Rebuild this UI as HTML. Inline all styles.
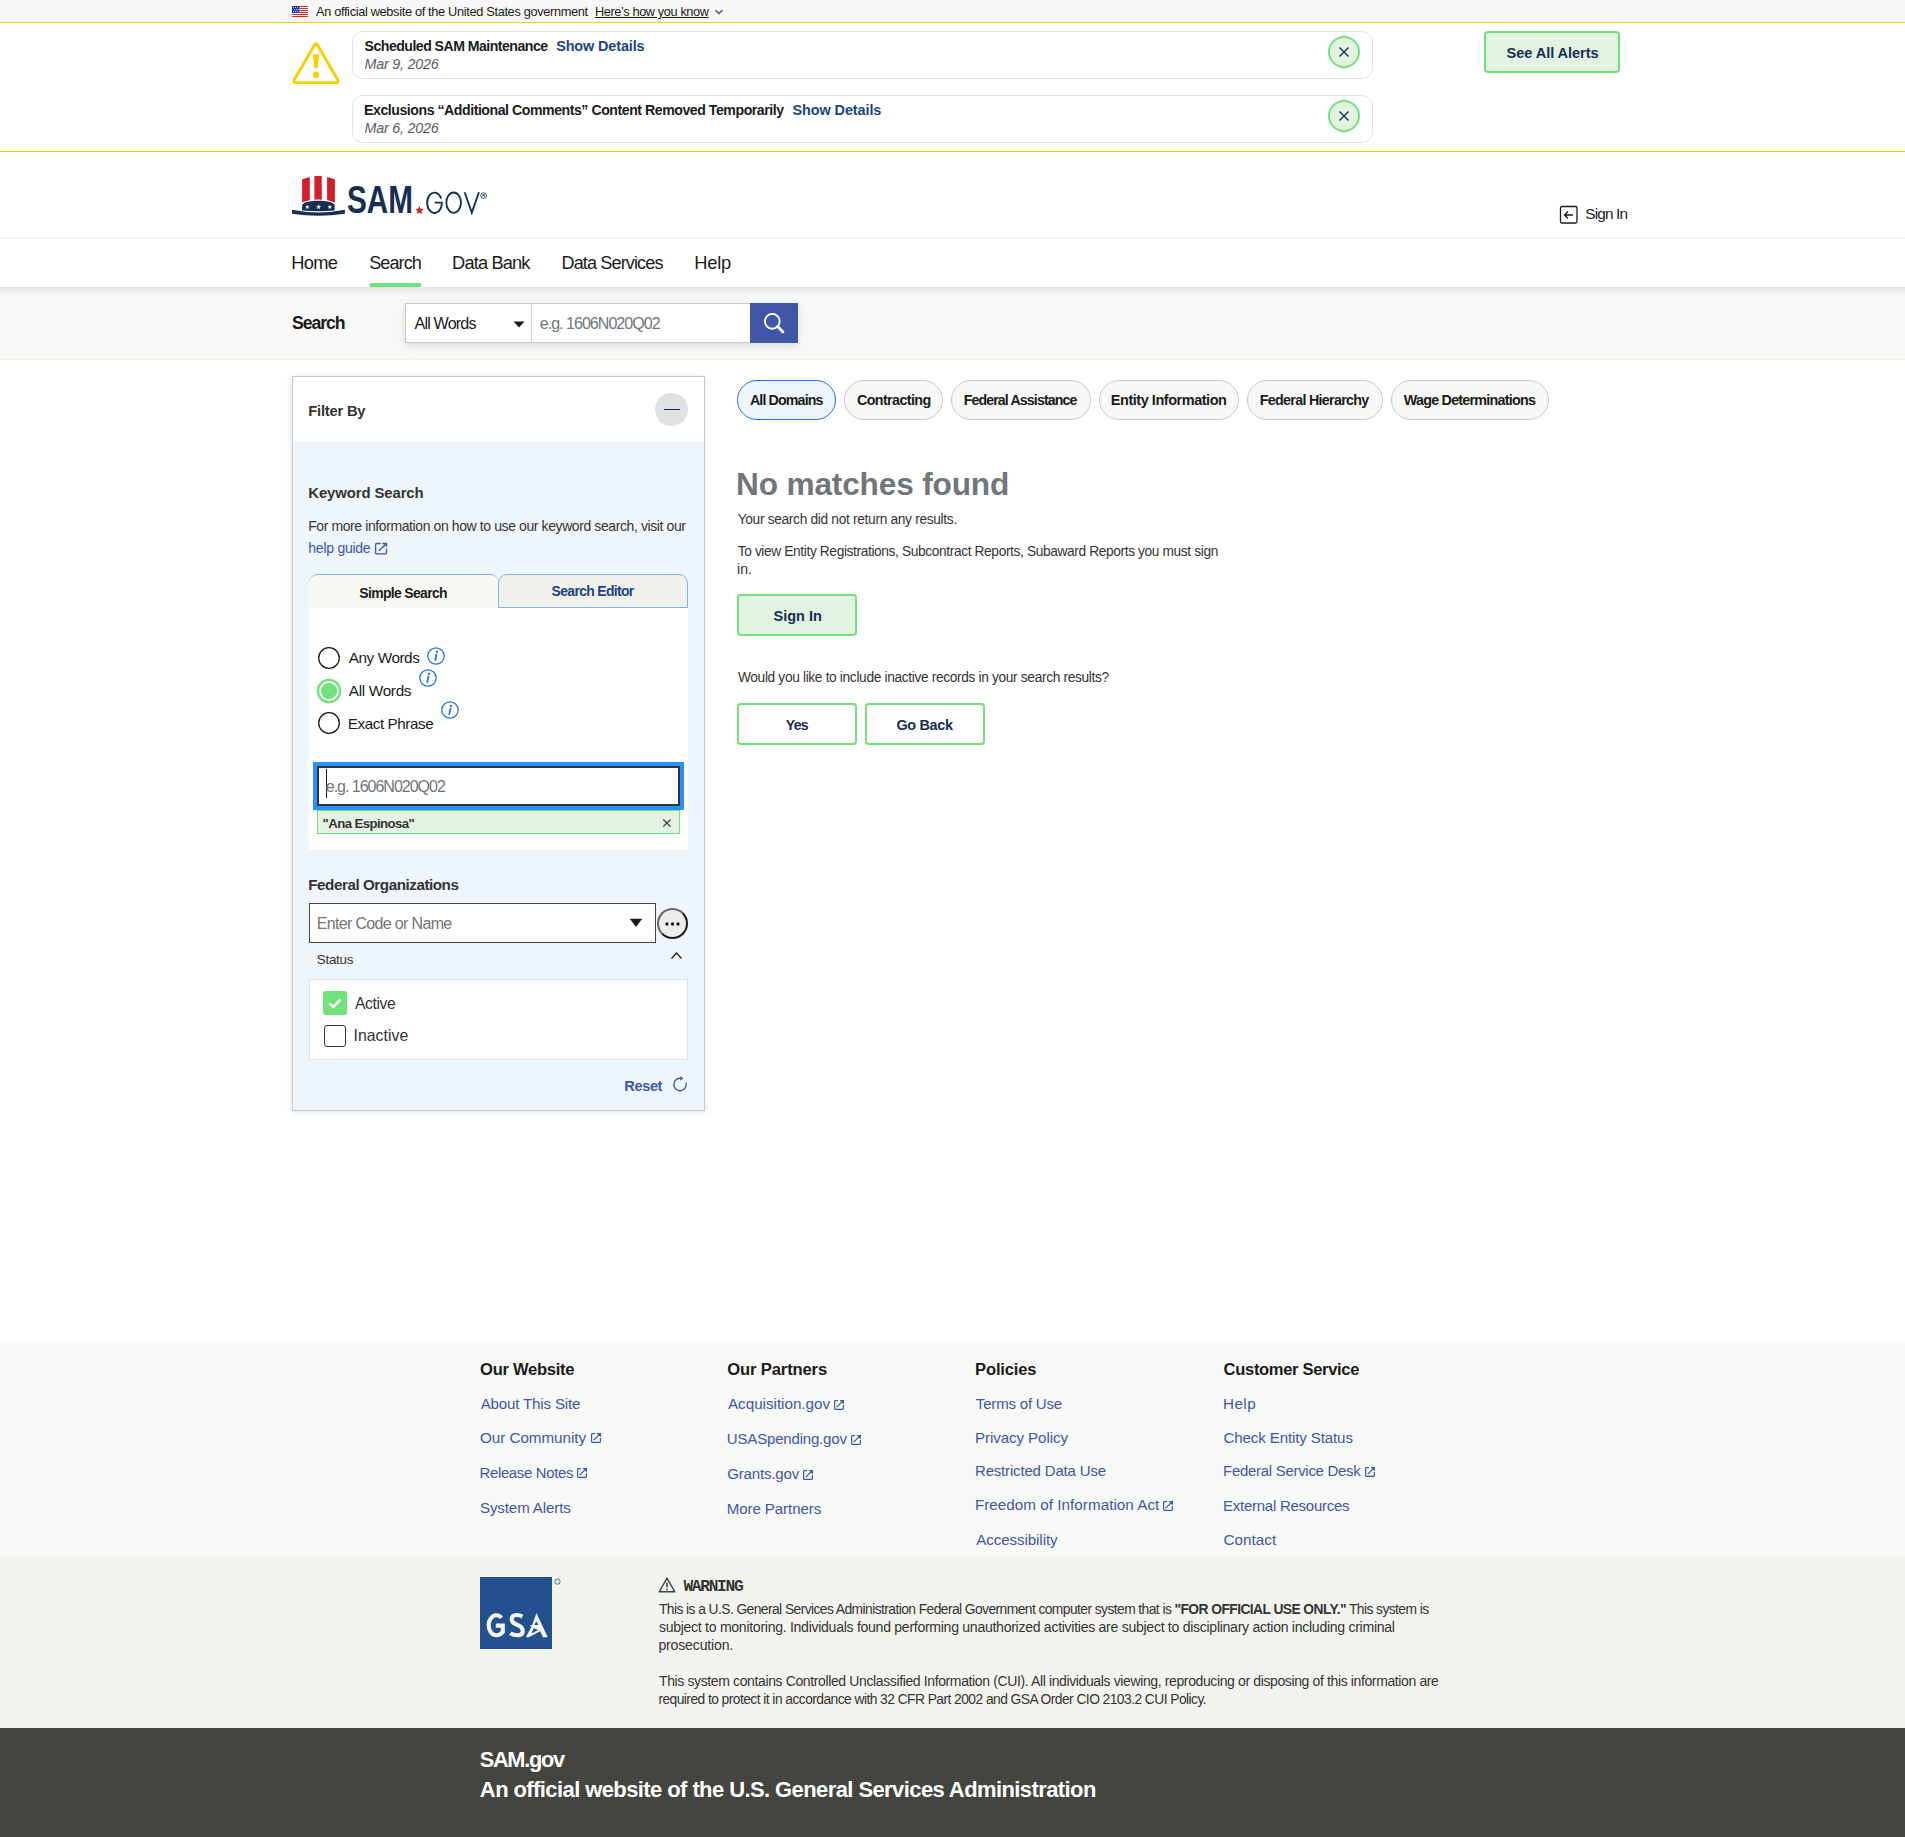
<!DOCTYPE html>
<html><head><meta charset="utf-8"><title>SAM.gov Search</title>
<style>
html,body{margin:0;padding:0;}
body{width:1905px;height:1837px;position:relative;overflow:hidden;background:#fff;font-family:'Liberation Sans', sans-serif;}
.t{position:absolute;white-space:nowrap;}
</style></head><body>
<div style="position:absolute;left:0px;top:0px;width:1905px;height:22px;background:#f7f7f5;"></div>
<div style="position:absolute;left:0px;top:22px;width:1905px;height:1px;background:#face00;"></div>
<div style="position:absolute;left:0px;top:151px;width:1905px;height:1px;background:#face00;"></div>
<div style="position:absolute;left:0px;top:238px;width:1905px;height:1px;background:#f0f0f0;"></div>
<div style="position:absolute;left:0px;top:287px;width:1905px;height:73px;background:#f8f8f6;"></div>
<div style="position:absolute;left:0px;top:359px;width:1905px;height:1px;background:#f1f1ec;"></div>
<div style="position:absolute;left:0px;top:1343px;width:1905px;height:214px;background:#f8f8f6;"></div>
<div style="position:absolute;left:0px;top:1557px;width:1905px;height:171px;background:#f3f3ee;"></div>
<div style="position:absolute;left:0px;top:1728px;width:1905px;height:109px;background:#454540;"></div>
<svg style="position:absolute;left:292px;top:6px" width="16" height="11" viewBox="0 0 16 11">
<rect width="16" height="11" fill="#fff"/>
<g fill="#e2261c"><rect x="7.5" y="0" width="8.5" height="1"/><rect x="7.5" y="2" width="8.5" height="1"/><rect x="7.5" y="4" width="8.5" height="1"/><rect x="7.5" y="6" width="8.5" height="1"/><rect x="0" y="8" width="16" height="1"/><rect x="0" y="10" width="16" height="1"/></g>
<rect x="0" y="0" width="7.5" height="7" fill="#0b2fb0"/>
<g fill="#fff"><circle cx="1.6" cy="1.6" r=".55"/><circle cx="3.6" cy="1.6" r=".55"/><circle cx="5.6" cy="1.6" r=".55"/><circle cx="2.6" cy="3.5" r=".55"/><circle cx="4.6" cy="3.5" r=".55"/><circle cx="6.3" cy="3.5" r=".55"/><circle cx="1.6" cy="5.4" r=".55"/><circle cx="3.6" cy="5.4" r=".55"/><circle cx="5.6" cy="5.4" r=".55"/></g>
</svg>
<svg style="position:absolute;left:714px;top:8px" width="10" height="8" viewBox="0 0 10 8"><path d="M1.5 2.2 L5 5.6 L8.5 2.2" fill="none" stroke="#3f57a6" stroke-width="1.4"/></svg>
<svg style="position:absolute;left:291px;top:41px" width="50" height="44" viewBox="0 0 50 44">
<path d="M23.5 4 Q25 1.4 26.5 4 L46.8 39 Q48.3 41.6 45.3 41.6 L4.7 41.6 Q1.7 41.6 3.2 39 Z" fill="none" stroke="#face00" stroke-width="2.9" stroke-linejoin="round"/>
<path d="M22 15.2 Q22 13 25 13 Q28 13 28 15.2 L26.7 26.6 Q25 28.6 23.3 26.6 Z" fill="#face00"/>
<circle cx="25" cy="33.9" r="3.1" fill="#face00"/>
</svg>
<div style="position:absolute;left:352px;top:31px;width:1021px;height:48px;box-sizing:border-box;border:1px solid #dfe1e2;border-radius:11px;background:#fff;"></div>
<div style="position:absolute;left:1328px;top:36px;width:32px;height:32px;box-sizing:border-box;border:2px solid #70e17b;border-radius:50%;background:#e3f3e1;"></div>
<svg style="position:absolute;left:1337px;top:45px" width="14" height="14" viewBox="0 0 14 14"><path d="M2.5 2.5 L11.5 11.5 M11.5 2.5 L2.5 11.5" stroke="#162e51" stroke-width="1.4"/></svg>
<div style="position:absolute;left:352px;top:95px;width:1021px;height:48px;box-sizing:border-box;border:1px solid #dfe1e2;border-radius:11px;background:#fff;"></div>
<div style="position:absolute;left:1328px;top:100px;width:32px;height:32px;box-sizing:border-box;border:2px solid #70e17b;border-radius:50%;background:#e3f3e1;"></div>
<svg style="position:absolute;left:1337px;top:109px" width="14" height="14" viewBox="0 0 14 14"><path d="M2.5 2.5 L11.5 11.5 M11.5 2.5 L2.5 11.5" stroke="#162e51" stroke-width="1.4"/></svg>
<div style="position:absolute;left:1484px;top:31px;width:136px;height:42px;box-sizing:border-box;border:2px solid #70e17b;border-radius:4px;background:#e3f3e1;"></div>
<svg style="position:absolute;left:291px;top:175px" width="198" height="44" viewBox="0 0 198 44">
<path d="M11.1 4.2 L18.8 1.9 L18.8 24.9 Q15 25.9 11.1 27.6 Z" fill="#d21f2d"/>
<path d="M23.4 1 L30.8 1 L30.8 24.7 Q27.1 24.2 23.4 24.7 Z" fill="#d21f2d"/>
<path d="M36.1 2 L43.9 4.2 L43.9 27.7 Q40 25.9 36.1 24.9 Z" fill="#d21f2d"/>
<path d="M11.1 29.9 C14 24.4 40.8 24.4 43.7 29.9 L43.7 35.5 Q27.4 37.1 11.1 35.5 Z" fill="#162e51"/>
<g fill="#fff"><path d="M16.30 29.70 L16.89 31.29 L18.58 31.36 L17.25 32.41 L17.71 34.04 L16.30 33.10 L14.89 34.04 L15.35 32.41 L14.02 31.36 L15.71 31.29Z"/><path d="M27.60 29.10 L28.28 30.97 L30.26 31.03 L28.69 32.26 L29.25 34.17 L27.60 33.05 L25.95 34.17 L26.51 32.26 L24.94 31.03 L26.92 30.97Z"/><path d="M38.80 29.70 L39.39 31.29 L41.08 31.36 L39.75 32.41 L40.21 34.04 L38.80 33.10 L37.39 34.04 L37.85 32.41 L36.52 31.36 L38.21 31.29Z"/></g>
<path d="M1 34.8 Q27.5 40.2 53.9 34.8 L53.9 38.8 Q27.5 42.6 1 38.8 Z" fill="#162e51"/>
<text x="56" y="38" font-family="Liberation Sans" font-weight="700" font-size="38" fill="#162e51" textLength="66" lengthAdjust="spacingAndGlyphs">SAM</text>
<path d="M128.5 31 l1.2 2.7 3 .3 -2.2 2 .6 2.9 -2.6-1.5 -2.6 1.5 .6-2.9 -2.2-2 3-.3z" fill="#d21f2d"/>
<g fill="none" stroke="#162e51" stroke-width="1.85">
<path d="M150.2 23.6 A7.35 10.15 0 1 0 150.6 30.5 L150.9 27.6 L143.7 27.6"/>
<ellipse cx="162.65" cy="27.65" rx="7.3" ry="10.15"/>
<path d="M173.6 17.2 L180.8 37.6 L187.9 17.2"/>
</g>
<circle cx="192.6" cy="20.6" r="2.9" fill="none" stroke="#162e51" stroke-width=".8"/>
<text x="191.2" y="22.3" font-family="Liberation Sans" font-weight="700" font-size="4.2" fill="#162e51">R</text>
</svg>
<svg style="position:absolute;left:1559px;top:205px" width="20" height="19" viewBox="0 0 20 19">
<rect x="1.5" y="1.5" width="16.5" height="16.5" rx="1.5" fill="none" stroke="#1b1b1b" stroke-width="1.3"/>
<path d="M14 10 L5.5 10 M9 6.5 L5.5 10 L9 13.5" fill="none" stroke="#1b1b1b" stroke-width="1.4"/>
</svg>
<div style="position:absolute;left:0;top:287px;width:1905px;height:9px;background:linear-gradient(rgba(0,0,0,0.09),rgba(0,0,0,0));"></div>
<div style="position:absolute;left:370px;top:283px;width:51px;height:4px;background:#70e17b;"></div>
<div style="position:absolute;left:405px;top:303px;width:393px;height:40px;box-shadow:0 3px 8px rgba(0,0,0,0.12);"></div>
<div style="position:absolute;left:405px;top:303px;width:127px;height:40px;box-sizing:border-box;border:1px solid #c9c9c9;background:#fff;"></div>
<div style="position:absolute;left:531px;top:303px;width:220px;height:40px;box-sizing:border-box;border:1px solid #c9c9c9;background:#fff;"></div>
<svg style="position:absolute;left:513px;top:321px" width="12" height="7" viewBox="0 0 12 7"><path d="M0.5 0.5 L11.5 0.5 L6 6.5 Z" fill="#1b1b1b"/></svg>
<div style="position:absolute;left:750px;top:303px;width:48px;height:40px;background:#3f57a6;"></div>
<svg style="position:absolute;left:762px;top:311px" width="24" height="24" viewBox="0 0 24 24"><circle cx="10.3" cy="10.3" r="7.4" fill="none" stroke="#fff" stroke-width="1.9"/><path d="M15.6 15.6 L21 21" stroke="#fff" stroke-width="2.8" stroke-linecap="round"/></svg>
<div style="position:absolute;left:292px;top:376px;width:413px;height:735px;box-sizing:border-box;border:1px solid #c9c9c9;background:#eef5fb;box-shadow:0 1px 6px rgba(0,0,0,0.12);"></div>
<div style="position:absolute;left:293px;top:377px;width:411px;height:65px;background:#fff;"></div>
<div style="position:absolute;left:655px;top:393px;width:33px;height:33px;border-radius:50%;background:#dfe1e2;"></div>
<div style="position:absolute;left:664px;top:408.5px;width:16px;height:1.5px;background:#162e51;"></div>
<svg style="position:absolute;left:374px;top:541px" width="14" height="14" viewBox="0 0 14 14"><path d="M6.7 2.5 L2.6 2.5 Q1.6 2.5 1.6 3.5 L1.6 11.9 Q1.6 12.9 2.6 12.9 L11.5 12.9 Q12.5 12.9 12.5 11.9 L12.5 7.7" fill="none" stroke="#3f57a6" stroke-width="1.3"/><path d="M8.2 2.5 L12.5 2.5 L12.5 5.8 M12.3 2.7 L5 9.7" fill="none" stroke="#3f57a6" stroke-width="1.3"/></svg>
<div style="position:absolute;left:309px;top:574px;width:190px;height:34px;box-sizing:border-box;border-top:1px solid #85aef2;border-radius:9px 9px 0 0;background:#f7f7f4;"></div>
<div style="position:absolute;left:498px;top:574px;width:190px;height:34px;box-sizing:border-box;border:1px solid #85aef2;border-radius:9px 9px 0 0;background:#f1f1ec;"></div>
<div style="position:absolute;left:309px;top:608px;width:379px;height:242px;background:#fff;"></div>
<svg style="position:absolute;left:317px;top:645.8px" width="24" height="24" viewBox="0 0 24 24"><circle cx="12" cy="12" r="10.3" fill="#fff" stroke="#1b1b1b" stroke-width="1.3"/></svg>
<svg style="position:absolute;left:427px;top:647.3px" width="18" height="18" viewBox="0 0 18 18"><circle cx="9" cy="9" r="8.2" fill="none" stroke="#2672de" stroke-width="1.3"/><circle cx="10" cy="5" r="1.15" fill="#2672de"/><path d="M9.4 7.6 L8.3 13.2" stroke="#2672de" stroke-width="1.8" stroke-linecap="round"/></svg>
<svg style="position:absolute;left:316px;top:677.6px" width="26" height="26" viewBox="0 0 26 26"><circle cx="13" cy="13" r="11.1" fill="#fff" stroke="#70e17b" stroke-width="2.4"/><circle cx="13" cy="13" r="8.1" fill="#70e17b"/></svg>
<svg style="position:absolute;left:419px;top:668.6px" width="18" height="18" viewBox="0 0 18 18"><circle cx="9" cy="9" r="8.2" fill="none" stroke="#2672de" stroke-width="1.3"/><circle cx="10" cy="5" r="1.15" fill="#2672de"/><path d="M9.4 7.6 L8.3 13.2" stroke="#2672de" stroke-width="1.8" stroke-linecap="round"/></svg>
<svg style="position:absolute;left:317px;top:710.8px" width="24" height="24" viewBox="0 0 24 24"><circle cx="12" cy="12" r="10.3" fill="#fff" stroke="#1b1b1b" stroke-width="1.3"/></svg>
<svg style="position:absolute;left:441px;top:701px" width="18" height="18" viewBox="0 0 18 18"><circle cx="9" cy="9" r="8.2" fill="none" stroke="#2672de" stroke-width="1.3"/><circle cx="10" cy="5" r="1.15" fill="#2672de"/><path d="M9.4 7.6 L8.3 13.2" stroke="#2672de" stroke-width="1.8" stroke-linecap="round"/></svg>
<div style="position:absolute;left:313px;top:762px;width:371px;height:48px;box-sizing:border-box;border:4px solid #2491ff;"></div>
<div style="position:absolute;left:317px;top:766px;width:363px;height:40px;box-sizing:border-box;border:2px solid #333;background:#fff;"></div>
<div style="position:absolute;left:326px;top:769px;width:1px;height:29px;background:#1b1b1b;"></div>
<div style="position:absolute;left:317px;top:810px;width:363px;height:24px;box-sizing:border-box;border:1px solid #70e17b;background:#e3f3e1;"></div>
<svg style="position:absolute;left:662px;top:818px" width="10" height="10" viewBox="0 0 10 10"><path d="M1.3 1.5 L8.5 8.7 M8.5 1.5 L1.3 8.7" stroke="#333" stroke-width="1.2"/></svg>
<div style="position:absolute;left:309px;top:903px;width:347px;height:40px;box-sizing:border-box;border:1.5px solid #454540;background:#fff;"></div>
<svg style="position:absolute;left:629px;top:918px" width="14" height="10" viewBox="0 0 14 10"><path d="M0.8 0.8 L13.2 0.8 L7 9 Z" fill="#1b1b1b"/></svg>
<div style="position:absolute;left:657px;top:908px;width:31px;height:31px;box-sizing:border-box;border-radius:50%;border:2px solid #1b1b1b;border-top-color:#666;border-left-color:#666;background:#ececec;"></div>
<svg style="position:absolute;left:664px;top:921px" width="18" height="6" viewBox="0 0 18 6"><circle cx="3" cy="3" r="1.7" fill="#1b1b1b"/><circle cx="8.5" cy="3" r="1.7" fill="#1b1b1b"/><circle cx="14" cy="3" r="1.7" fill="#1b1b1b"/></svg>
<svg style="position:absolute;left:670px;top:951px" width="13" height="9" viewBox="0 0 13 9"><path d="M1.5 7.5 L6.5 2 L11.5 7.5" fill="none" stroke="#1b1b1b" stroke-width="1.3"/></svg>
<div style="position:absolute;left:309px;top:979px;width:379px;height:81px;box-sizing:border-box;border:1px solid #dfe1e2;background:#fff;"></div>
<div style="position:absolute;left:323px;top:991px;width:24px;height:24px;border-radius:3px;background:#70e17b;"></div>
<svg style="position:absolute;left:323px;top:991px" width="24" height="24" viewBox="0 0 24 24"><path d="M6.5 12.5 L10.3 16 L17.5 8.5" fill="none" stroke="#fff" stroke-width="2.6"/></svg>
<div style="position:absolute;left:324px;top:1025px;width:22px;height:22px;box-sizing:border-box;border:1.5px solid #333;border-radius:3px;background:#fff;"></div>
<svg style="position:absolute;left:671px;top:1075px" width="17" height="17" viewBox="0 0 17 17"><path d="M8.9 3.3 A6.2 6.2 0 1 0 14.9 7.6" fill="none" stroke="#3f57a6" stroke-width="1.4"/><path d="M9.2 1.1 L12.3 3.4 L9.2 5.7 Z" fill="#3f57a6"/></svg>
<div style="position:absolute;left:737px;top:380px;width:99px;height:40px;box-sizing:border-box;border:1px solid #2672de;border-radius:20px;background:#eff6fb;"></div>
<div style="position:absolute;left:844px;top:380px;width:99px;height:40px;box-sizing:border-box;border:1px solid #c9c9c9;border-radius:20px;background:#f7f7f5;"></div>
<div style="position:absolute;left:951px;top:380px;width:140px;height:40px;box-sizing:border-box;border:1px solid #c9c9c9;border-radius:20px;background:#f7f7f5;"></div>
<div style="position:absolute;left:1099px;top:380px;width:140px;height:40px;box-sizing:border-box;border:1px solid #c9c9c9;border-radius:20px;background:#f7f7f5;"></div>
<div style="position:absolute;left:1247px;top:380px;width:136px;height:40px;box-sizing:border-box;border:1px solid #c9c9c9;border-radius:20px;background:#f7f7f5;"></div>
<div style="position:absolute;left:1391px;top:380px;width:158px;height:40px;box-sizing:border-box;border:1px solid #c9c9c9;border-radius:20px;background:#f7f7f5;"></div>
<div style="position:absolute;left:737px;top:594px;width:120px;height:42px;box-sizing:border-box;border:2px solid #70e17b;border-radius:4px;background:#e3f3e1;"></div>
<div style="position:absolute;left:737px;top:703px;width:120px;height:42px;box-sizing:border-box;border:2px solid #70e17b;border-radius:4px;background:#fff;"></div>
<div style="position:absolute;left:865px;top:703px;width:120px;height:42px;box-sizing:border-box;border:2px solid #70e17b;border-radius:4px;background:#fff;"></div>
<svg style="position:absolute;left:591px;top:1433px" width="11" height="11" viewBox="0 0 11 11"><path d="M3.9 0.6 L1.4 0.6 Q0.6 0.6 0.6 1.4 L0.6 8.6 Q0.6 9.4 1.4 9.4 L8.6 9.4 Q9.4 9.4 9.4 8.6 L9.4 5.0 M6.1 0.6 L9.4 0.6 L9.4 3.7 M9.2 0.8 L2.6 7.1" fill="none" stroke="#3f57a6" stroke-width="1.2"/></svg>
<svg style="position:absolute;left:577px;top:1468px" width="11" height="11" viewBox="0 0 11 11"><path d="M3.9 0.6 L1.4 0.6 Q0.6 0.6 0.6 1.4 L0.6 8.6 Q0.6 9.4 1.4 9.4 L8.6 9.4 Q9.4 9.4 9.4 8.6 L9.4 5.0 M6.1 0.6 L9.4 0.6 L9.4 3.7 M9.2 0.8 L2.6 7.1" fill="none" stroke="#3f57a6" stroke-width="1.2"/></svg>
<svg style="position:absolute;left:834px;top:1400px" width="11" height="11" viewBox="0 0 11 11"><path d="M3.9 0.6 L1.4 0.6 Q0.6 0.6 0.6 1.4 L0.6 8.6 Q0.6 9.4 1.4 9.4 L8.6 9.4 Q9.4 9.4 9.4 8.6 L9.4 5.0 M6.1 0.6 L9.4 0.6 L9.4 3.7 M9.2 0.8 L2.6 7.1" fill="none" stroke="#3f57a6" stroke-width="1.2"/></svg>
<svg style="position:absolute;left:851px;top:1435px" width="11" height="11" viewBox="0 0 11 11"><path d="M3.9 0.6 L1.4 0.6 Q0.6 0.6 0.6 1.4 L0.6 8.6 Q0.6 9.4 1.4 9.4 L8.6 9.4 Q9.4 9.4 9.4 8.6 L9.4 5.0 M6.1 0.6 L9.4 0.6 L9.4 3.7 M9.2 0.8 L2.6 7.1" fill="none" stroke="#3f57a6" stroke-width="1.2"/></svg>
<svg style="position:absolute;left:803px;top:1470px" width="11" height="11" viewBox="0 0 11 11"><path d="M3.9 0.6 L1.4 0.6 Q0.6 0.6 0.6 1.4 L0.6 8.6 Q0.6 9.4 1.4 9.4 L8.6 9.4 Q9.4 9.4 9.4 8.6 L9.4 5.0 M6.1 0.6 L9.4 0.6 L9.4 3.7 M9.2 0.8 L2.6 7.1" fill="none" stroke="#3f57a6" stroke-width="1.2"/></svg>
<svg style="position:absolute;left:1163px;top:1501px" width="11" height="11" viewBox="0 0 11 11"><path d="M3.9 0.6 L1.4 0.6 Q0.6 0.6 0.6 1.4 L0.6 8.6 Q0.6 9.4 1.4 9.4 L8.6 9.4 Q9.4 9.4 9.4 8.6 L9.4 5.0 M6.1 0.6 L9.4 0.6 L9.4 3.7 M9.2 0.8 L2.6 7.1" fill="none" stroke="#3f57a6" stroke-width="1.2"/></svg>
<svg style="position:absolute;left:1365px;top:1467px" width="11" height="11" viewBox="0 0 11 11"><path d="M3.9 0.6 L1.4 0.6 Q0.6 0.6 0.6 1.4 L0.6 8.6 Q0.6 9.4 1.4 9.4 L8.6 9.4 Q9.4 9.4 9.4 8.6 L9.4 5.0 M6.1 0.6 L9.4 0.6 L9.4 3.7 M9.2 0.8 L2.6 7.1" fill="none" stroke="#3f57a6" stroke-width="1.2"/></svg>
<svg style="position:absolute;left:480px;top:1577px" width="82" height="73" viewBox="0 0 82 73">
<rect x="0" y="0" width="72" height="72" fill="#23508f"/>
<g fill="none" stroke="#f5f5f0" stroke-width="4.1">
<path d="M21.6 40.6 A7.9 10 0 1 0 21.2 56.4 L22.8 54.8 L22.8 48.6 L15.8 48.6"/>
<path d="M42.4 39.6 Q39.2 37.9 36.6 38 Q31.8 38.1 31.7 42.2 Q31.6 45.3 35.6 47.1 L39 48.7 Q43 50.6 42.8 54.5 Q42.5 58.3 37.4 58.3 Q33.4 58.3 30.3 56.2"/>
</g>
<path d="M56.4 36 L67.8 60.2 L63 60.2 L60.2 54.2 L48.8 60.2 L45.8 60.2 L51.6 49.6 L49.6 47.9 L52.2 47.9 Z M56.4 44.2 L54.2 47.9 L58.4 47.9 Z" fill="#f5f5f0" fill-rule="evenodd"/>
<path d="M53.6 51.2 L51.4 56.4 L58.2 53 Z" fill="#23508f"/>
<circle cx="77.5" cy="4.6" r="2.6" fill="none" stroke="#23508f" stroke-width=".8"/>
</svg>
<svg style="position:absolute;left:658px;top:1577px" width="18" height="16" viewBox="0 0 18 16">
<path d="M9 1.2 L16.8 14.8 L1.2 14.8 Z" fill="none" stroke="#3d4551" stroke-width="1.4" stroke-linejoin="round"/>
<path d="M9 5.5 L9 10.2" stroke="#3d4551" stroke-width="1.6"/><circle cx="9" cy="12.4" r=".9" fill="#3d4551"/>
</svg>
<div class="t" style="left:315.98px;top:6.01px;font-size:12.76px;line-height:12.76px;color:#1b1b1b;letter-spacing:-0.322px;">An official website of the United States government</div>
<div class="t" style="left:594.96px;top:6.01px;font-size:12.72px;line-height:12.72px;color:#1b1b1b;letter-spacing:-0.369px;text-decoration:underline;">Here’s how you know</div>
<div class="t" style="left:364.59px;top:38.81px;font-size:14.11px;line-height:14.11px;color:#1b1b1b;font-weight:700;letter-spacing:-0.522px;">Scheduled SAM Maintenance</div>
<div class="t" style="left:556.19px;top:38.81px;font-size:14.39px;line-height:14.39px;color:#1a4480;font-weight:700;letter-spacing:-0.097px;">Show Details</div>
<div class="t" style="left:364.56px;top:56.61px;font-size:14.32px;line-height:14.32px;color:#565c65;font-style:italic;letter-spacing:-0.215px;">Mar 9, 2026</div>
<div class="t" style="left:364.05px;top:102.71px;font-size:14.14px;line-height:14.14px;color:#1b1b1b;font-weight:700;letter-spacing:-0.459px;">Exclusions “Additional Comments” Content Removed Temporarily</div>
<div class="t" style="left:792.58px;top:102.70px;font-size:14.41px;line-height:14.41px;color:#1a4480;font-weight:700;letter-spacing:-0.079px;">Show Details</div>
<div class="t" style="left:364.56px;top:120.61px;font-size:14.32px;line-height:14.32px;color:#565c65;font-style:italic;letter-spacing:-0.215px;">Mar 6, 2026</div>
<div class="t" style="left:1506.58px;top:45.80px;font-size:14.56px;line-height:14.56px;color:#162e51;font-weight:700;letter-spacing:-0.054px;">See All Alerts</div>
<div class="t" style="left:1585.30px;top:205.51px;font-size:15.38px;line-height:15.38px;color:#1b1b1b;letter-spacing:-0.863px;">Sign In</div>
<div class="t" style="left:291.30px;top:254.02px;font-size:18.27px;line-height:18.27px;color:#1b1b1b;letter-spacing:-0.741px;">Home</div>
<div class="t" style="left:369.18px;top:254.01px;font-size:18.07px;line-height:18.07px;color:#1b1b1b;letter-spacing:-0.908px;">Search</div>
<div class="t" style="left:452.11px;top:254.01px;font-size:18.22px;line-height:18.22px;color:#1b1b1b;letter-spacing:-0.842px;">Data Bank</div>
<div class="t" style="left:561.52px;top:254.01px;font-size:18.09px;line-height:18.09px;color:#1b1b1b;letter-spacing:-0.883px;">Data Services</div>
<div class="t" style="left:694.19px;top:254.01px;font-size:18.37px;line-height:18.37px;color:#1b1b1b;letter-spacing:-0.262px;">Help</div>
<div class="t" style="left:291.99px;top:315.01px;font-size:17.65px;line-height:17.65px;color:#1b1b1b;font-weight:700;letter-spacing:-1.048px;">Search</div>
<div class="t" style="left:414.57px;top:315.00px;font-size:16.18px;line-height:16.18px;color:#1b1b1b;letter-spacing:-0.861px;">All Words</div>
<div class="t" style="left:539.72px;top:315.00px;font-size:16.09px;line-height:16.09px;color:#71767a;letter-spacing:-1.000px;">e.g. 1606N020Q02</div>
<div class="t" style="left:308.31px;top:404.21px;font-size:14.79px;line-height:14.79px;color:#343434;font-weight:600;letter-spacing:-0.234px;">Filter By</div>
<div class="t" style="left:308.30px;top:485.70px;font-size:14.92px;line-height:14.92px;color:#343434;font-weight:700;letter-spacing:-0.115px;">Keyword Search</div>
<div class="t" style="left:308.15px;top:519.21px;font-size:13.99px;line-height:13.99px;color:#343434;letter-spacing:-0.393px;">For more information on how to use our keyword search, visit our</div>
<div class="t" style="left:308.33px;top:541.21px;font-size:14.01px;line-height:14.01px;color:#3f57a6;letter-spacing:-0.259px;">help guide</div>
<div class="t" style="left:359.30px;top:586.51px;font-size:13.94px;line-height:13.94px;color:#1b1b1b;font-weight:700;letter-spacing:-0.650px;">Simple Search</div>
<div class="t" style="left:551.60px;top:585.31px;font-size:13.93px;line-height:13.93px;color:#1a4480;font-weight:700;letter-spacing:-0.660px;">Search Editor</div>
<div class="t" style="left:348.77px;top:649.80px;font-size:15.32px;line-height:15.32px;color:#1b1b1b;letter-spacing:-0.441px;">Any Words</div>
<div class="t" style="left:348.77px;top:682.81px;font-size:15.36px;line-height:15.36px;color:#1b1b1b;letter-spacing:-0.332px;">All Words</div>
<div class="t" style="left:347.75px;top:715.91px;font-size:15.21px;line-height:15.21px;color:#1b1b1b;letter-spacing:-0.409px;">Exact Phrase</div>
<div class="t" style="left:325.82px;top:777.70px;font-size:16.05px;line-height:16.05px;color:#71767a;letter-spacing:-1.033px;">e.g. 1606N020Q02</div>
<div class="t" style="left:322.53px;top:816.51px;font-size:13.24px;line-height:13.24px;color:#343434;font-weight:700;letter-spacing:-0.595px;">&quot;Ana Espinosa&quot;</div>
<div class="t" style="left:308.28px;top:877.40px;font-size:15.23px;line-height:15.23px;color:#343434;font-weight:600;letter-spacing:-0.460px;">Federal Organizations</div>
<div class="t" style="left:316.68px;top:915.21px;font-size:16.04px;line-height:16.04px;color:#757575;letter-spacing:-0.671px;">Enter Code or Name</div>
<div class="t" style="left:316.79px;top:952.91px;font-size:13.42px;line-height:13.42px;color:#343434;letter-spacing:-0.264px;">Status</div>
<div class="t" style="left:354.97px;top:995.91px;font-size:15.69px;line-height:15.69px;color:#343434;letter-spacing:-0.401px;">Active</div>
<div class="t" style="left:353.54px;top:1028.01px;font-size:15.86px;line-height:15.86px;color:#343434;letter-spacing:0.002px;">Inactive</div>
<div class="t" style="left:624.32px;top:1078.90px;font-size:14.64px;line-height:14.64px;color:#3f57a6;font-weight:600;letter-spacing:-0.421px;">Reset</div>
<div class="t" style="left:749.95px;top:393.31px;font-size:14.2px;line-height:14.2px;color:#1b1b1b;font-weight:700;letter-spacing:-0.846px;">All Domains</div>
<div class="t" style="left:857.01px;top:393.31px;font-size:14.33px;line-height:14.33px;color:#1b1b1b;font-weight:700;letter-spacing:-0.626px;">Contracting</div>
<div class="t" style="left:963.65px;top:393.30px;font-size:14.14px;line-height:14.14px;color:#1b1b1b;font-weight:700;letter-spacing:-0.848px;">Federal Assistance</div>
<div class="t" style="left:1110.83px;top:393.30px;font-size:14.47px;line-height:14.47px;color:#1b1b1b;font-weight:700;letter-spacing:-0.455px;">Entity Information</div>
<div class="t" style="left:1259.74px;top:393.30px;font-size:14.3px;line-height:14.3px;color:#1b1b1b;font-weight:700;letter-spacing:-0.704px;">Federal Hierarchy</div>
<div class="t" style="left:1403.79px;top:393.30px;font-size:14.32px;line-height:14.32px;color:#1b1b1b;font-weight:700;letter-spacing:-0.762px;">Wage Determinations</div>
<div class="t" style="left:736.08px;top:468.91px;font-size:31.63px;line-height:31.63px;color:#71767a;font-weight:700;letter-spacing:-0.177px;">No matches found</div>
<div class="t" style="left:737.70px;top:512.70px;font-size:13.74px;line-height:13.74px;color:#343434;letter-spacing:-0.317px;">Your search did not return any results.</div>
<div class="t" style="left:737.69px;top:545.02px;font-size:13.73px;line-height:13.73px;color:#343434;letter-spacing:-0.369px;">To view Entity Registrations, Subcontract Reports, Subaward Reports you must sign</div>
<div class="t" style="left:737.06px;top:561.71px;font-size:14.1px;line-height:14.1px;color:#343434;">in.</div>
<div class="t" style="left:773.48px;top:608.81px;font-size:14.51px;line-height:14.51px;color:#162e51;font-weight:700;letter-spacing:-0.004px;">Sign In</div>
<div class="t" style="left:737.94px;top:671.20px;font-size:13.74px;line-height:13.74px;color:#343434;letter-spacing:-0.346px;">Would you like to include inactive records in your search results?</div>
<div class="t" style="left:785.76px;top:718.00px;font-size:14.08px;line-height:14.08px;color:#162e51;font-weight:700;letter-spacing:-0.732px;">Yes</div>
<div class="t" style="left:896.41px;top:718.00px;font-size:14.41px;line-height:14.41px;color:#162e51;font-weight:700;letter-spacing:-0.313px;">Go Back</div>
<div class="t" style="left:480.02px;top:1361.81px;font-size:16.56px;line-height:16.56px;color:#1b1b1b;font-weight:700;letter-spacing:-0.261px;">Our Website</div>
<div class="t" style="left:727.32px;top:1361.80px;font-size:16.63px;line-height:16.63px;color:#1b1b1b;font-weight:700;letter-spacing:-0.153px;">Our Partners</div>
<div class="t" style="left:975.09px;top:1361.82px;font-size:16.52px;line-height:16.52px;color:#1b1b1b;font-weight:700;letter-spacing:-0.151px;">Policies</div>
<div class="t" style="left:1223.62px;top:1361.80px;font-size:16.54px;line-height:16.54px;color:#1b1b1b;font-weight:700;letter-spacing:-0.317px;">Customer Service</div>
<div class="t" style="left:480.67px;top:1395.60px;font-size:15.08px;line-height:15.08px;color:#3f57a6;letter-spacing:-0.156px;">About This Site</div>
<div class="t" style="left:479.98px;top:1430.20px;font-size:15.2px;line-height:15.2px;color:#3f57a6;letter-spacing:-0.016px;">Our Community</div>
<div class="t" style="left:479.48px;top:1465.81px;font-size:14.89px;line-height:14.89px;color:#3f57a6;letter-spacing:-0.302px;">Release Notes</div>
<div class="t" style="left:480.02px;top:1499.51px;font-size:15.08px;line-height:15.08px;color:#3f57a6;letter-spacing:-0.120px;">System Alerts</div>
<div class="t" style="left:727.97px;top:1395.61px;font-size:15.24px;line-height:15.24px;color:#3f57a6;letter-spacing:-0.028px;">Acquisition.gov</div>
<div class="t" style="left:726.84px;top:1430.51px;font-size:15.05px;line-height:15.05px;color:#3f57a6;letter-spacing:-0.204px;">USASpending.gov</div>
<div class="t" style="left:727.24px;top:1465.51px;font-size:15.05px;line-height:15.05px;color:#3f57a6;letter-spacing:-0.178px;">Grants.gov</div>
<div class="t" style="left:726.76px;top:1500.51px;font-size:15.07px;line-height:15.07px;color:#3f57a6;letter-spacing:-0.080px;">More Partners</div>
<div class="t" style="left:975.86px;top:1395.81px;font-size:15.03px;line-height:15.03px;color:#3f57a6;letter-spacing:-0.195px;">Terms of Use</div>
<div class="t" style="left:974.96px;top:1429.90px;font-size:15.11px;line-height:15.11px;color:#3f57a6;letter-spacing:-0.075px;">Privacy Policy</div>
<div class="t" style="left:974.97px;top:1463.01px;font-size:15.01px;line-height:15.01px;color:#3f57a6;letter-spacing:-0.173px;">Restricted Data Use</div>
<div class="t" style="left:974.95px;top:1497.31px;font-size:15.24px;line-height:15.24px;color:#3f57a6;letter-spacing:0.024px;">Freedom of Information Act</div>
<div class="t" style="left:976.17px;top:1532.20px;font-size:15.17px;line-height:15.17px;color:#3f57a6;letter-spacing:-0.091px;">Accessibility</div>
<div class="t" style="left:1223.06px;top:1395.81px;font-size:15.16px;line-height:15.16px;color:#3f57a6;letter-spacing:0.469px;">Help</div>
<div class="t" style="left:1223.53px;top:1429.91px;font-size:15.09px;line-height:15.09px;color:#3f57a6;letter-spacing:-0.120px;">Check Entity Status</div>
<div class="t" style="left:1223.07px;top:1464.01px;font-size:14.96px;line-height:14.96px;color:#3f57a6;letter-spacing:-0.276px;">Federal Service Desk</div>
<div class="t" style="left:1223.07px;top:1499.12px;font-size:14.97px;line-height:14.97px;color:#3f57a6;letter-spacing:-0.244px;">External Resources</div>
<div class="t" style="left:1223.53px;top:1532.21px;font-size:15.19px;line-height:15.19px;color:#3f57a6;letter-spacing:0.040px;">Contact</div>
<div class="t" style="left:683.40px;top:1579.10px;font-size:16.2px;line-height:16.2px;color:#343434;font-weight:700;font-family:'Liberation Mono', monospace;letter-spacing:-1.284px;">WARNING</div>
<div class="t" style="left:658.99px;top:1602.80px;font-size:13.84px;line-height:13.84px;color:#343434;letter-spacing:-0.574px;">This is a U.S. General Services Administration Federal Government computer system that is <b>"FOR OFFICIAL USE ONLY."</b> This system is</div>
<div class="t" style="left:658.91px;top:1619.80px;font-size:14.08px;line-height:14.08px;color:#343434;letter-spacing:-0.290px;">subject to monitoring. Individuals found performing unauthorized activities are subject to disciplinary action including criminal</div>
<div class="t" style="left:658.39px;top:1637.81px;font-size:14.07px;line-height:14.07px;color:#343434;letter-spacing:-0.156px;">prosecution.</div>
<div class="t" style="left:658.99px;top:1673.90px;font-size:14.0px;line-height:14.0px;color:#343434;letter-spacing:-0.376px;">This system contains Controlled Unclassified Information (CUI). All individuals viewing, reproducing or disposing of this information are</div>
<div class="t" style="left:658.38px;top:1692.91px;font-size:13.82px;line-height:13.82px;color:#343434;letter-spacing:-0.552px;">required to protect it in accordance with 32 CFR Part 2002 and GSA Order CIO 2103.2 CUI Policy.</div>
<div class="t" style="left:479.77px;top:1748.80px;font-size:21.76px;line-height:21.76px;color:#fff;font-weight:600;letter-spacing:-1.304px;">SAM.gov</div>
<div class="t" style="left:479.85px;top:1779.40px;font-size:21.97px;line-height:21.97px;color:#fff;font-weight:600;letter-spacing:-0.577px;">An official website of the U.S. General Services Administration</div>
</body></html>
